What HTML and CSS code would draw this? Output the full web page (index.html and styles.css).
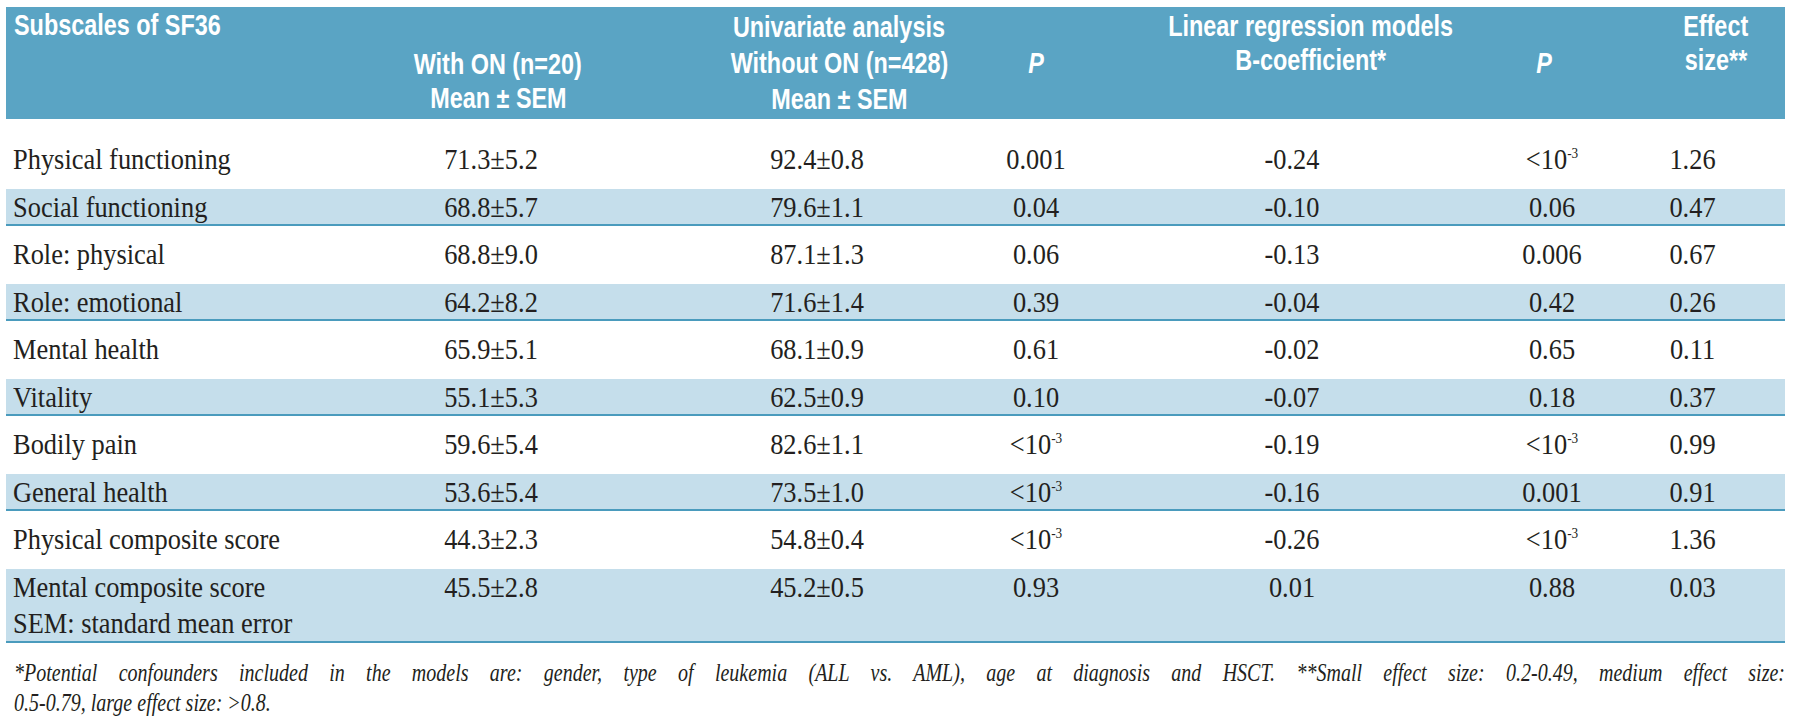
FILE: index.html
```html
<!DOCTYPE html>
<html lang="en">
<head>
<meta charset="utf-8">
<title>SF36 subscales</title>
<link rel="stylesheet" href="styles.css">
</head>
<body>
<div class="page">
  <div class="sheet">
    <div class="head">
      <div class="h h1"><span>Subscales of SF36</span></div>
      <div class="h h2"><span>With ON (n=20)</span><span>Mean ± SEM</span></div>
      <div class="h h3"><span>Univariate analysis</span><span>Without ON (n=428)</span><span>Mean ± SEM</span></div>
      <div class="h h4"><span class="pv">P</span></div>
      <div class="h h5"><span>Linear regression models</span><span>B-coefficient*</span></div>
      <div class="h h6"><span class="pv">P</span></div>
      <div class="h h7"><span>Effect</span><span>size**</span></div>
    </div>

    <div class="row first">
      <div class="c c1">Physical functioning</div><div class="c">71.3±5.2</div><div class="c">92.4±0.8</div><div class="c">0.001</div><div class="c">-0.24</div><div class="c">&lt;10<sup>-3</sup></div><div class="c">1.26</div>
    </div>
    <div class="row alt">
      <div class="c c1">Social functioning</div><div class="c">68.8±5.7</div><div class="c">79.6±1.1</div><div class="c">0.04</div><div class="c">-0.10</div><div class="c">0.06</div><div class="c">0.47</div>
    </div>
    <div class="row">
      <div class="c c1">Role: physical</div><div class="c">68.8±9.0</div><div class="c">87.1±1.3</div><div class="c">0.06</div><div class="c">-0.13</div><div class="c">0.006</div><div class="c">0.67</div>
    </div>
    <div class="row alt">
      <div class="c c1">Role: emotional</div><div class="c">64.2±8.2</div><div class="c">71.6±1.4</div><div class="c">0.39</div><div class="c">-0.04</div><div class="c">0.42</div><div class="c">0.26</div>
    </div>
    <div class="row">
      <div class="c c1">Mental health</div><div class="c">65.9±5.1</div><div class="c">68.1±0.9</div><div class="c">0.61</div><div class="c">-0.02</div><div class="c">0.65</div><div class="c">0.11</div>
    </div>
    <div class="row alt">
      <div class="c c1">Vitality</div><div class="c">55.1±5.3</div><div class="c">62.5±0.9</div><div class="c">0.10</div><div class="c">-0.07</div><div class="c">0.18</div><div class="c">0.37</div>
    </div>
    <div class="row">
      <div class="c c1">Bodily pain</div><div class="c">59.6±5.4</div><div class="c">82.6±1.1</div><div class="c">&lt;10<sup>-3</sup></div><div class="c">-0.19</div><div class="c">&lt;10<sup>-3</sup></div><div class="c">0.99</div>
    </div>
    <div class="row alt">
      <div class="c c1">General health</div><div class="c">53.6±5.4</div><div class="c">73.5±1.0</div><div class="c">&lt;10<sup>-3</sup></div><div class="c">-0.16</div><div class="c">0.001</div><div class="c">0.91</div>
    </div>
    <div class="row">
      <div class="c c1">Physical composite score</div><div class="c">44.3±2.3</div><div class="c">54.8±0.4</div><div class="c">&lt;10<sup>-3</sup></div><div class="c">-0.26</div><div class="c">&lt;10<sup>-3</sup></div><div class="c">1.36</div>
    </div>
    <div class="row alt last">
      <div class="c c1">Mental composite score<br>SEM: standard mean error</div><div class="c">45.5±2.8</div><div class="c">45.2±0.5</div><div class="c">0.93</div><div class="c">0.01</div><div class="c">0.88</div><div class="c">0.03</div>
    </div>

    <div class="note-wrap">
      <div class="note">
        <span class="note-line">*Potential confounders included in the models are: gender, type of leukemia (ALL vs. AML), age at diagnosis and HSCT. **Small effect size: 0.2-0.49, medium effect size:</span>
        <span class="note-end">0.5-0.79, large effect size: &gt;0.8.</span>
      </div>
    </div>
  </div>
</div>
</body>
</html>
```

FILE: styles.css
```css
html, body {
  margin: 0;
  padding: 0;
  background: #ffffff;
}

.page {
  padding: 7px 0 0 6px;
}

.sheet {
  width: 1779px;
}

.head,
.row {
  display: grid;
  grid-template-columns: 334px 302px 350px 88px 424px 96px 185px;
}

/* ---------- header ---------- */
.head {
  height: 112px;
  background: #5aa4c4;
  color: #ffffff;
  font-family: "Liberation Sans", Arial, sans-serif;
  font-weight: bold;
  font-size: 30px;
}

.h {
  display: flex;
  flex-direction: column;
  box-sizing: border-box;
  white-space: nowrap;
}

.h span {
  display: block;
  transform: scaleX(0.78);
}

.h .pv {
  font-style: italic;
}

.h1 {
  padding: 2px 0 0 8px;
  line-height: 31px;
}

.h1 span {
  transform-origin: left center;
}

.h2 {
  justify-content: flex-end;
  align-items: center;
  padding: 0 0 4px 14px;
  line-height: 34px;
}

.h3 {
  justify-content: center;
  align-items: center;
  padding-left: 44px;
  line-height: 36px;
}

.h4 {
  justify-content: center;
  align-items: center;
}

.h5 {
  align-items: center;
  padding: 2px 0 0 38px;
  line-height: 34px;
}

.h6 {
  justify-content: center;
  align-items: center;
  padding-right: 16px;
}

.h7 {
  align-items: center;
  padding: 2px 0 0 47px;
  line-height: 34px;
}

/* ---------- body rows ---------- */
.row {
  margin-top: 10.5px;
  height: 37px;
  box-sizing: border-box;
  font-family: "Liberation Serif", "Times New Roman", serif;
  font-size: 30px;
  line-height: 35px;
  color: #231f20;
}

.row.first {
  margin-top: 22px;
}

.row.alt {
  background: #c5deeb;
  border-bottom: 2px solid #4a9bbd;
}

.row.last {
  height: 74px;
  line-height: 36px;
}

.c {
  text-align: center;
  white-space: nowrap;
  transform: scaleX(0.88);
}

.c1 {
  text-align: left;
  padding-left: 8px;
  transform-origin: left center;
}

.c sup {
  font-size: 15px;
  line-height: 0;
  vertical-align: 11px;
}

/* ---------- footnote ---------- */
.note-wrap {
  margin-top: 15px;
  padding-left: 8px;
}

.note {
  width: 2300px;
  transform: scaleX(0.77);
  transform-origin: left top;
  font-family: "Liberation Serif", "Times New Roman", serif;
  font-style: italic;
  font-size: 26px;
  line-height: 30px;
  color: #231f20;
}

.note-line {
  display: block;
  text-align: justify;
  text-align-last: justify;
}

.note-end {
  display: block;
}
```
